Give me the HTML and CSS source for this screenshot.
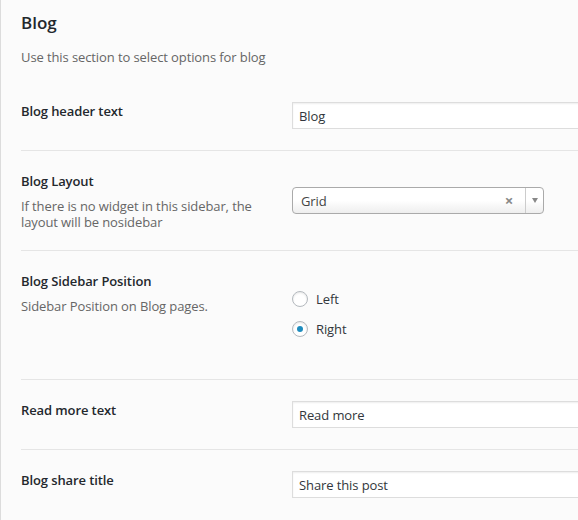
FILE: index.html
```html
<!DOCTYPE html>
<html>
<head>
<meta charset="utf-8">
<link rel="stylesheet" href="styles.css">
</head>
<body>
<div class="page">
  <h2 class="title">Blog</h2>
  <p class="intro">Use this section to select options for blog</p>

  <div class="row">
    <div class="label-col"><div class="label">Blog header text</div></div>
    <div class="control-col"><div class="input">Blog</div></div>
  </div>

  <div class="row">
    <div class="label-col">
      <div class="label">Blog Layout</div>
      <div class="desc">If there is no widget in this sidebar, the layout will be nosidebar</div>
    </div>
    <div class="control-col">
      <div class="select">
        <span class="select-value">Grid</span>
        <span class="select-clear">&#215;</span>
        <span class="select-arrow"><span class="tri"></span></span>
      </div>
    </div>
  </div>

  <div class="row">
    <div class="label-col">
      <div class="label">Blog Sidebar Position</div>
      <div class="desc">Sidebar Position on Blog pages.</div>
    </div>
    <div class="control-col">
      <div class="radios">
        <div class="radio-item"><span class="radio"></span><span class="radio-label">Left</span></div>
        <div class="radio-item"><span class="radio checked"></span><span class="radio-label">Right</span></div>
      </div>
    </div>
  </div>

  <div class="row">
    <div class="label-col"><div class="label">Read more text</div></div>
    <div class="control-col"><div class="input">Read more</div></div>
  </div>

  <div class="row last">
    <div class="label-col"><div class="label">Blog share title</div></div>
    <div class="control-col"><div class="input">Share this post</div></div>
  </div>
</div>
</body>
</html>
```

FILE: styles.css
```css
html, body {
  margin: 0;
  padding: 0;
}
body {
  background: #fbfbfb;
  border-left: 1px solid #dcdcdc;
  height: 520px;
  overflow: hidden;
  font-family: "Open Sans", "Noto Sans", sans-serif;
  font-size: 13px;
  letter-spacing: -0.1px;
  color: #23282d;
}
.page {
  padding-left: 20px;
  width: 700px;
}
.title {
  margin: 0;
  padding-top: 11px;
  font-size: 17px;
  line-height: 23px;
  font-weight: 600;
  letter-spacing: 0;
  color: #23282d;
}
.intro {
  margin: 15px 0 0;
  line-height: 17px;
  color: #666;
  height: 17px;
  padding-bottom: 15px;
}
.row {
  display: flex;
  border-bottom: 1px solid #e5e5e5;
}
.row.last {
  border-bottom: 0;
}
.label-col {
  width: 271px;
  flex: none;
  padding: 22px 0 20px;
}
.label {
  font-weight: 600;
  line-height: 17px;
  color: #23282d;
}
.desc {
  margin-top: 8px;
  line-height: 16px;
  color: #666;
  width: 240px;
}
.control-col {
  display: flex;
  align-items: center;
  padding: 21px 0;
}
.input {
  box-sizing: border-box;
  width: 330px;
  height: 27px;
  line-height: 24px;
  padding: 1px 6px 0;
  background: #fff;
  border: 1px solid #ddd;
  box-shadow: inset 0 1px 2px rgba(0, 0, 0, 0.07);
  color: #32373c;
}
.select {
  box-sizing: border-box;
  width: 252px;
  height: 27px;
  display: flex;
  align-items: center;
  border: 1px solid #aaa;
  border-radius: 4px;
  background: linear-gradient(to bottom, #ffffff 50%, #eeeeee 100%);
  color: #444;
}
.select-value {
  flex: 1;
  padding: 1px 0 0 8px;
  line-height: 24px;
}
.select-clear {
  width: 20px;
  text-align: center;
  color: #888;
  font-weight: 700;
  font-size: 15px;
  line-height: 25px;
  margin-right: 6px;
}
.select-arrow {
  width: 17px;
  height: 25px;
  border-left: 1px solid #ccc;
  display: flex;
  align-items: center;
  justify-content: center;
}
.tri {
  width: 0;
  height: 0;
  border-left: 3px solid transparent;
  border-right: 3px solid transparent;
  border-top: 5px solid #888;
}
.radios {
  padding: 12px 0 14px;
}
.radio-item {
  display: flex;
  align-items: center;
  height: 30px;
}
.radio {
  box-sizing: border-box;
  width: 16px;
  height: 16px;
  border: 1px solid #b4b9be;
  border-radius: 50%;
  background: #fff;
  box-shadow: inset 0 1px 2px rgba(0, 0, 0, 0.1);
  display: flex;
  align-items: center;
  justify-content: center;
  margin-right: 8px;
}
.radio.checked::after {
  content: "";
  width: 6px;
  height: 6px;
  border-radius: 50%;
  background: #1e8cbe;
}
.radio-label {
  color: #32373c;
  line-height: 17px;
  padding-top: 1px;
}
```
